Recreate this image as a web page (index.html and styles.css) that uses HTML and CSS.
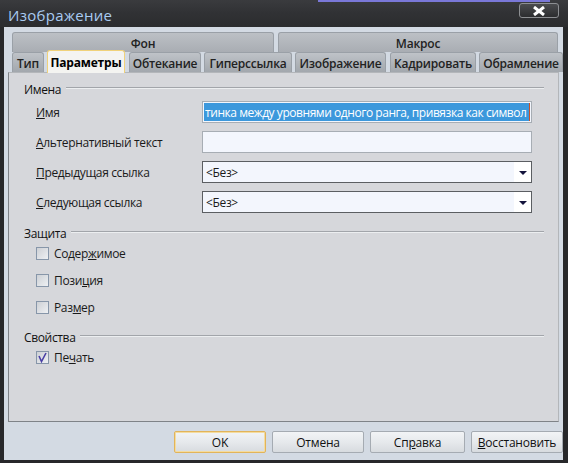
FILE: index.html
```html
<!DOCTYPE html>
<html lang="ru">
<head>
    <meta charset="UTF-8">
    <title>Изображение</title>
    <link rel="stylesheet" href="styles.css">
</head>
<body>
    <div class="window">
        <div class="backdrop"></div>
        <div class="titlebar">
            <span class="title">Изображение</span>
            <button class="close-btn">
                <svg width="16" height="10" viewBox="0 0 16 10">
                    <path d="M3 1 L13 9 M13 1 L3 9" stroke="#fff" stroke-width="3"/>
                </svg>
            </button>
        </div>

        <div class="frame">
            <div class="tabs">
                <div class="tab-row">
                    <div class="tab wide">Фон</div>
                    <div class="tab wide">Макрос</div>
                </div>
                <div class="tab-row">
                    <div class="tab w-type">Тип</div>
                    <div class="tab active">Параметры</div>
                    <div class="tab w-wrap">Обтекание</div>
                    <div class="tab w-link">Гиперссылка</div>
                    <div class="tab w-image">Изображение</div>
                    <div class="tab w-crop">Кадрировать</div>
                    <div class="tab w-border">Обрамление</div>
                </div>
            </div>

            <div class="panel">
                <div class="group-title"><span>Имена</span></div>
                <div class="field-row">
                    <label><u>И</u>мя</label>
                    <div class="input selected"><span>тинка между уровнями одного ранга, привязка как символ</span><i class="caret"></i></div>
                </div>
                <div class="field-row">
                    <label><u>А</u>льтернативный текст</label>
                    <div class="input"></div>
                </div>
                <div class="field-row">
                    <label><u>П</u>редыдущая ссылка</label>
                    <div class="input combo"><span>&lt;Без&gt;</span><b class="arrow"></b></div>
                </div>
                <div class="field-row">
                    <label><u>С</u>ледующая ссылка</label>
                    <div class="input combo"><span>&lt;Без&gt;</span><b class="arrow"></b></div>
                </div>

                <div class="group-title second"><span>Защита</span></div>
                <div class="check-row"><span class="box"></span>Содер<u>ж</u>имое</div>
                <div class="check-row"><span class="box"></span>Пози<u>ц</u>ия</div>
                <div class="check-row"><span class="box"></span>Раз<u>м</u>ер</div>

                <div class="group-title third"><span>Свойства</span></div>
                <div class="check-row">
                    <span class="box">
                        <svg width="11" height="11" viewBox="0 0 11 11">
                            <path d="M2 4 L4.5 9.5 L9 1" fill="none" stroke="#4a3fa6" stroke-width="1.6"/>
                        </svg>
                    </span>Пе<u>ч</u>ать
                </div>
            </div>

            <div class="buttons">
                <button class="btn default">OK</button>
                <button class="btn">Отмена</button>
                <button class="btn">Сп<u>р</u>авка</button>
                <button class="btn"><u>В</u>осстановить</button>
            </div>
        </div>
    </div>
</body>
</html>
```

FILE: styles.css
```css
body {
    margin: 0;
    font-family: 'Open Sans', 'Noto Sans', sans-serif;
    font-size: 12px;
    letter-spacing: -0.35px;
    color: #1a1a1a;
    background: #2a2b2d;
}

.window {
    position: relative;
    width: 568px;
    height: 463px;
    display: flex;
    flex-direction: column;
    background: #27282a;
    overflow: hidden;
}

/* window of another app peeking above the title bar */
.backdrop {
    position: absolute;
    top: 0;
    left: 318px;
    width: 232px;
    height: 2px;
    background: #7a78d8;
}

.titlebar {
    height: 27px;
    display: flex;
    align-items: center;
    padding: 0 9px 0 8px;
    background: linear-gradient(#3a3b3e 0%, #313235 45%, #2b2c2e 100%);
}

.title {
    color: #a9cbf2;
    font-size: 15px;
    letter-spacing: 0.3px;
    margin-top: 2px;
}

.close-btn {
    margin-left: auto;
    margin-top: -6px;
    width: 40px;
    height: 15px;
    padding: 0;
    border: 1px solid #8d8f92;
    border-radius: 3px;
    background: linear-gradient(#4a4b4e, #2c2d2f);
    display: flex;
    align-items: center;
    justify-content: center;
}

.frame {
    flex: 1;
    margin: 0 5px 3px 4px;
    padding: 5px 0 0 4px;
    background: #d3dae3;
    display: flex;
    flex-direction: column;
}

.tabs {
    padding-left: 4px;
}

.tab-row {
    display: flex;
    gap: 3px;
    height: 20px;
    align-items: flex-end;
}

.tab {
    height: 20px;
    box-sizing: border-box;
    border: 1px solid #9aa0a7;
    border-bottom: none;
    border-radius: 3px 3px 0 0;
    background: linear-gradient(#bfc3c8, #a2a7ad);
    font-weight: 600;
    letter-spacing: -0.2px;
    color: #222;
    display: flex;
    align-items: center;
    justify-content: center;
    padding-top: 1px;
}

.tab.wide {
    width: 262px;
    background: linear-gradient(#bcc0c5, #a9adb3);
}

.tab.wide + .tab.wide {
    width: 280px;
    margin-left: 1px;
}

.w-type { width: 32px; }
.w-wrap { width: 72px; margin-left: 1px; }
.w-link { width: 88px; }
.w-image { width: 91px; }
.w-crop { width: 86px; margin-left: 1px; }
.w-border { width: 84px; }

.tab.active {
    width: 78px;
    height: 23px;
    margin-bottom: -1px;
    background: #f4f4f1;
    border: 1px solid #f0d27a;
    border-bottom: none;
    color: #000;
    font-weight: 700;
    position: relative;
    z-index: 1;
}

.panel {
    height: 350px;
    width: 551px;
    box-sizing: border-box;
    border: 1px solid #7f8388;
    border-top-color: #b3b6ba;
    border-right-color: #b3b6ba;
    background: #d6d7db;
    padding: 8px 14px 0 15px;
}

.group-title {
    display: flex;
    align-items: center;
    gap: 5px;
    height: 16px;
    color: #111;
}

.group-title::after {
    content: "";
    flex: 1;
    border-top: 1px solid #a2a5aa;
    border-bottom: 1px solid #eceef0;
    margin-top: -2px;
}

.group-title.second { margin-top: 12px; }
.group-title.third { margin-top: 14px; }

.field-row {
    display: flex;
    align-items: center;
    margin-top: 4px;
    height: 22px;
}

.field-row + .field-row {
    margin-top: 8px;
}

.field-row label {
    width: 178px;
    padding-left: 12px;
    box-sizing: border-box;
    color: #1a1a1a;
}

.input {
    width: 330px;
    height: 22px;
    box-sizing: border-box;
    border: 1px solid #a7adb4;
    background: #f3f6fd;
    display: flex;
    align-items: center;
    padding: 0 1px;
    overflow: hidden;
    white-space: nowrap;
}

.input.selected {
    padding: 1px;
}

.input.selected span {
    flex: 1;
    height: 100%;
    background: #3c98dc;
    color: #fff;
    display: flex;
    align-items: center;
    padding-left: 1px;
    letter-spacing: -0.45px;
    overflow: hidden;
}

.caret {
    width: 1px;
    height: 100%;
    background: #c8502a;
}

.input.combo {
    border-color: #5b5e62;
    padding: 0;
}

.input.combo span {
    flex: 1;
    padding-left: 3px;
}

.arrow {
    width: 17px;
    height: 20px;
    background: #fff;
    display: flex;
    align-items: center;
    justify-content: center;
}

.arrow::before {
    content: "";
    border-left: 4px solid transparent;
    border-right: 4px solid transparent;
    border-top: 4px solid #14143c;
    margin-top: 2px;
}

.check-row {
    display: flex;
    align-items: center;
    height: 16px;
    margin-top: 4px;
    padding-left: 12px;
}

.check-row + .check-row {
    margin-top: 11px;
}

.box {
    width: 13px;
    height: 13px;
    box-sizing: border-box;
    border: 1px solid #8796a9;
    background: linear-gradient(135deg, #cdd0d5, #eef0f3);
    margin-right: 5px;
    display: flex;
    align-items: center;
    justify-content: center;
}

.buttons {
    display: flex;
    justify-content: flex-end;
    gap: 6px;
    padding: 9px 0 0 0;
    width: 555px;
}

.btn {
    height: 22px;
    width: 92px;
    font-family: inherit;
    font-size: 12px;
    letter-spacing: -0.2px;
    color: #111;
    border: 1px solid #a5abb2;
    border-radius: 2px;
    background: linear-gradient(#f2f4f6 0%, #e6e9ec 50%, #d7dbdf 100%);
    padding: 0;
}

.btn.default {
    border-color: #e2b45a;
    box-shadow: inset 0 0 0 1px #f4dca0;
}

.btn:nth-child(3) { width: 95px; }
```
